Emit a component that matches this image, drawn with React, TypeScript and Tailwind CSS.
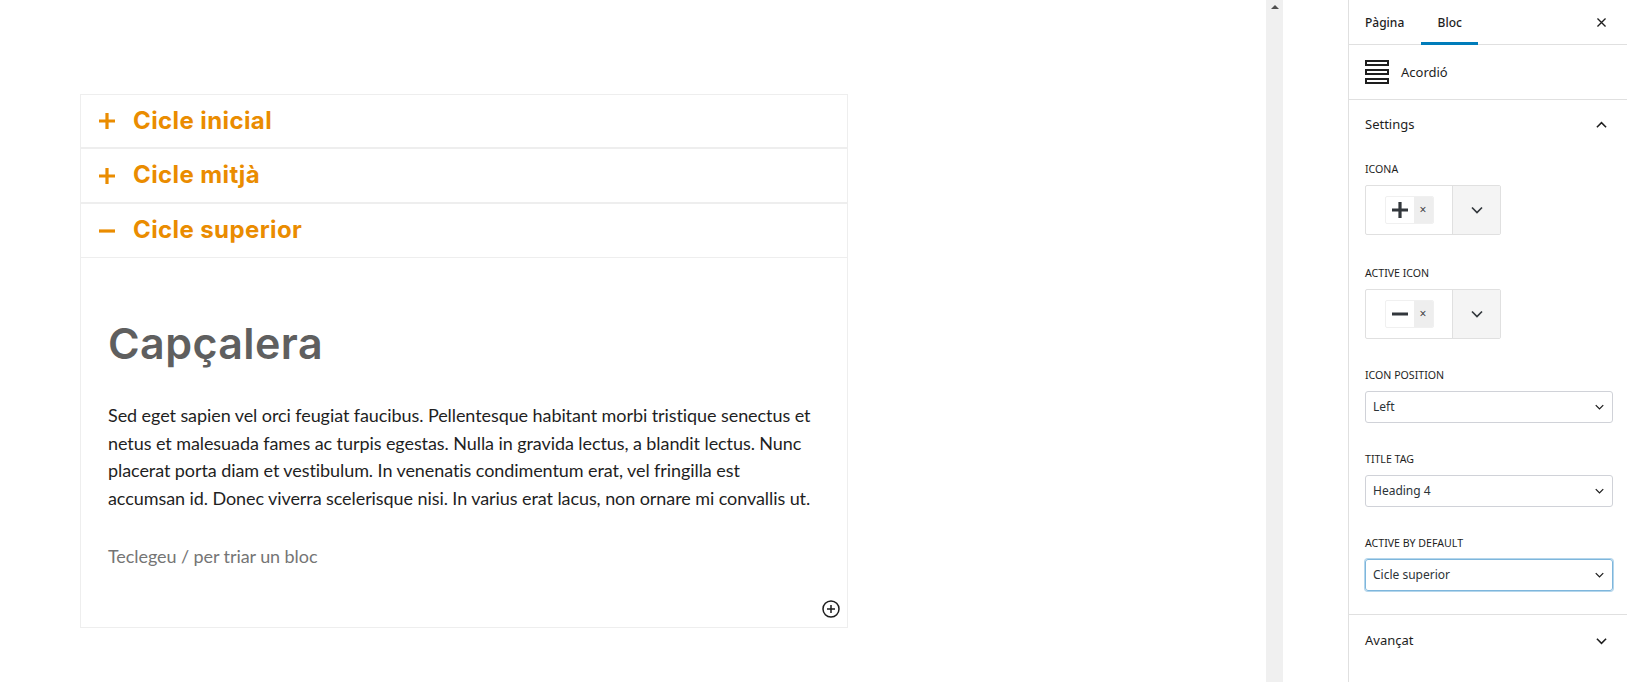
const ORANGE = 'text-[#ea8c00]'

function Plus({ className }: { className?: string }) {
  return (
    <svg viewBox="0 0 16 16" className={className} fill="currentColor" aria-hidden>
      <path d="M6.4 0h3.2v6.4H16v3.2H9.6V16H6.4V9.6H0V6.4h6.4z" />
    </svg>
  )
}

function Minus({ className }: { className?: string }) {
  return (
    <svg viewBox="0 0 16 16" className={className} fill="currentColor" aria-hidden>
      <path d="M0 6.4h16v3.2H0z" />
    </svg>
  )
}

function Chevron({ up, className }: { up?: boolean; className?: string }) {
  return (
    <svg viewBox="0 0 12 8" className={className} fill="none" stroke="currentColor" strokeWidth="1.7" aria-hidden>
      <path d={up ? 'M1 6.5l5-5 5 5' : 'M1 1.5l5 5 5-5'} />
    </svg>
  )
}

function AccordionHeader({ title, open, h }: { title: string; open?: boolean; h: string }) {
  return (
    <div className={`flex items-center border border-[#eeeeee] pl-[18px] ${h}`}>
      {open ? <Minus className={`h-4 w-4 ${ORANGE}`} /> : <Plus className={`h-4 w-4 ${ORANGE}`} />}
      <h4 className={`ml-[18px] -mt-[1px] font-['Inter',sans-serif] text-[24px] font-bold tracking-[0.4px] ${ORANGE}`}>{title}</h4>
    </div>
  )
}

function Label({ children }: { children: string }) {
  return <div className="text-[10.6px] leading-4 text-[#1e1e1e] uppercase">{children}</div>
}

function IconPicker({ label, minus, className }: { label: string; minus?: boolean; className?: string }) {
  return (
    <div className={className}>
      <Label>{label}</Label>
      <div className="mt-2 flex h-[50px] w-[136px] rounded-[2px] border border-[#e0e0e0]">
        <div className="flex w-[86px] items-center justify-center">
          <div className="flex h-[28px] overflow-hidden rounded-[2px] border border-[#f0f0f0]">
            <div className="flex w-[28px] items-center justify-center text-[#32373c]">
              {minus ? <Minus className="h-4 w-4" /> : <Plus className="h-4 w-4" />}
            </div>
            <div className="flex w-[19px] items-center justify-center bg-[#eeeeee] text-[12px] leading-none text-[#444444]">
              ×
            </div>
          </div>
        </div>
        <div className="flex flex-1 items-center justify-center border-l border-[#e0e0e0] bg-[#f4f4f4] text-[#32373c]">
          <Chevron className="h-2 w-3" />
        </div>
      </div>
    </div>
  )
}

function SelectField({ label, value, focused, className }: { label: string; value: string; focused?: boolean; className?: string }) {
  return (
    <div className={className}>
      <Label>{label}</Label>
      <div
        className={`mt-2 flex h-8 w-[248px] items-center justify-between rounded-[3px] border pr-[8px] pl-[7px] text-[12px] text-[#2c3338] ${
          focused ? 'border-[#7eb6dc] shadow-[0_0_0_1px_#b4d6ec]' : 'border-[#d0d2d8]'
        }`}
      >
        <span>{value}</span>
        <Chevron className="h-[6px] w-[9px] text-[#1e1e1e]" />
      </div>
    </div>
  )
}

export default function App() {
  return (
    <div className="flex h-[682px] overflow-hidden bg-white font-['Noto_Sans',sans-serif]">
      <main className="w-[1266px] shrink-0 pt-[94px] pl-20">
        <div className="w-[768px]">
          <AccordionHeader title="Cicle inicial" h="h-[54px]" />
          <AccordionHeader title="Cicle mitjà" h="h-[55px]" />
          <AccordionHeader title="Cicle superior" open h="h-[55px]" />
          <div className="flex h-[370px] flex-col border-x border-b border-[#eeeeee] pt-[54px] pr-[30px] pl-[27px]">
            <h2 className="font-['Inter',sans-serif] text-[43px] leading-[62px] font-semibold tracking-[0.4px] text-[#5f5f5f]">Capçalera</h2>
            <p className="mt-[28px] font-['Lato',sans-serif] text-[18px] leading-[27.7px] tracking-[-0.08px] text-[#1f1f1f] [font-variant-ligatures:none]">
              Sed eget sapien vel orci feugiat faucibus. Pellentesque habitant morbi tristique senectus et netus et
              malesuada fames ac turpis egestas. Nulla in gravida lectus, a blandit lectus. Nunc placerat porta diam et
              vestibulum. In venenatis condimentum erat, vel fringilla est accumsan id. Donec viverra scelerisque nisi.
              In varius erat lacus, non ornare mi convallis ut.
            </p>
            <p className="mt-[29px] font-['Lato',sans-serif] text-[18px] leading-[28px] tracking-[-0.08px] text-[#757575] [font-variant-ligatures:none]">
              Teclegeu / per triar un bloc
            </p>
            <div className="mt-auto mr-[-23px] mb-[9px] flex justify-end">
              <svg viewBox="0 0 18 18" className="h-[18px] w-[18px] text-[#1e1e1e]" fill="none" stroke="currentColor" strokeWidth="1.5" aria-hidden>
                <circle cx="9" cy="9" r="8" />
                <path d="M9 5v8M5 9h8" />
              </svg>
            </div>
          </div>
        </div>
      </main>

      <div className="flex w-[17px] shrink-0 justify-center bg-[#f0f0f0] pt-[5px]">
        <div className="h-0 w-0 border-x-[4px] border-b-[4px] border-x-transparent border-b-[#505050]" />
      </div>

      <div className="w-[65px] shrink-0" />

      <aside className="w-[279px] shrink-0 border-l border-[#e0e0e0] text-[13px] text-[#1e1e1e]">
        <div className="flex h-[45px] items-stretch border-b border-[#e0e0e0] pl-[16px]">
          <div className="flex items-center pt-[2px] text-[12px] font-medium">Pàgina</div>
          <div className="ml-[17px] -mb-px flex w-[57px] items-center justify-center border-b-[3px] border-[#007cba] pt-[3px] text-[12px] font-medium">
            Bloc
          </div>
          <div className="ml-auto flex items-center pr-[21px]">
            <svg viewBox="0 0 10 10" className="h-[9px] w-[9px]" fill="none" stroke="currentColor" strokeWidth="1.5" aria-hidden>
              <path d="M.5.5l9 9M9.5.5l-9 9" />
            </svg>
          </div>
        </div>

        <div className="flex h-[55px] items-center border-b border-[#e0e0e0] pl-[16px]">
          <svg viewBox="0 0 24 24" className="h-6 w-6" fill="none" stroke="#1e1e1e" strokeWidth="2" aria-hidden>
            <path d="M1 1h22v4H1zM1 10h22v4H1zM1 19h22v4H1z" />
          </svg>
          <span className="ml-3 pt-[2px] text-[13px]">Acordió</span>
        </div>

        <div className="flex h-[50px] items-center justify-between pr-[20px] pl-[16px]">
          <span>Settings</span>
          <Chevron up className="h-2 w-[11px]" />
        </div>

        <div className="h-[465px] border-b border-[#e0e0e0] pt-[11px] pl-[16px]">
          <IconPicker label="Icona" />
          <IconPicker label="Active icon" minus className="mt-[30px]" />
          <SelectField label="Icon position" value="Left" className="mt-[28px]" />
          <SelectField label="Title tag" value="Heading 4" className="mt-[28px]" />
          <SelectField label="Active by default" value="Cicle superior" focused className="mt-[28px]" />
        </div>

        <div className="flex h-[52px] items-center justify-between pr-[20px] pl-[16px]">
          <span>Avançat</span>
          <Chevron className="h-2 w-[11px]" />
        </div>
      </aside>
    </div>
  )
}
